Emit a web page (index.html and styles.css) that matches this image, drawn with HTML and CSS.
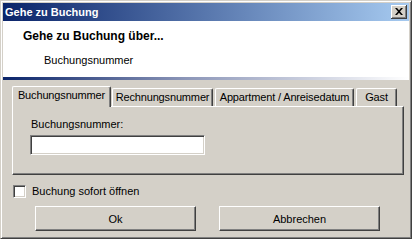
FILE: index.html
```html
<!DOCTYPE html>
<html lang="de">

<head>
    <meta charset="UTF-8">
    <title>Gehe zu Buchung</title>
    <link rel="stylesheet" href="styles.css">
</head>

<body>
    <div class="window">
        <div class="titlebar">
            <span class="title">Gehe zu Buchung</span>
            <button class="close" title="Schließen">
                <svg width="8" height="7" viewBox="0 0 8 7">
                    <path d="M0 0h2l2 2.2L6 0h2L5 3.5 8 7H6L4 4.8 2 7H0l3-3.5z" fill="#000" />
                </svg>
            </button>
        </div>

        <div class="header">
            <div class="header-title">Gehe zu Buchung über...</div>
            <div class="header-sub">Buchungsnummer</div>
        </div>
        <div class="header-line"></div>

        <div class="content">
            <div class="tabs">
                <div class="tab active tab-1">Buchungsnummer</div>
                <div class="tab tab-2">Rechnungsnummer</div>
                <div class="tab tab-3">Appartment / Anreisedatum</div>
                <div class="tab tab-4">Gast</div>
            </div>
            <div class="panel">
                <label for="nummer" class="field-label">Buchungsnummer:</label>
                <input type="text" id="nummer" class="field">
            </div>

            <label class="check">
                <span class="box"></span>
                Buchung sofort öffnen
            </label>

            <div class="buttons">
                <button class="btn">Ok</button>
                <button class="btn">Abbrechen</button>
            </div>
        </div>
    </div>
</body>

</html>
```

FILE: styles.css
```css
body {
    margin: 0;
    background-color: #d4d0c8;
    font-family: "Liberation Sans", Arial, sans-serif;
    font-size: 11px;
    color: #000;
}

.window {
    width: 412px;
    height: 239px;
    box-sizing: border-box;
    display: flex;
    flex-direction: column;
    padding: 2px;
    border-top: 1px solid #d4d0c8;
    border-left: 1px solid #d4d0c8;
    border-right: 1px solid #404040;
    border-bottom: 1px solid #404040;
    box-shadow: inset 1px 1px #fff, inset -1px -1px #808080;
    background-color: #d4d0c8;
}

/* title bar */
.titlebar {
    height: 18px;
    display: flex;
    align-items: center;
    justify-content: space-between;
    padding: 0 2px;
    background: linear-gradient(to right, #0a246a, #a6caf0);
}

.title {
    color: #fff;
    font-weight: bold;
    font-size: 11px;
    line-height: 18px;
}

.close {
    width: 16px;
    height: 14px;
    padding: 0;
    display: flex;
    align-items: center;
    justify-content: center;
    background-color: #d4d0c8;
    border: none;
    border-right: 1px solid #404040;
    border-bottom: 1px solid #404040;
    box-shadow: inset 1px 1px #fff, inset -1px -1px #808080;
}

/* white header */
.header {
    height: 56px;
    box-sizing: border-box;
    background-color: #fff;
    padding: 8px 0 0 20px;
}

.header-title {
    font-weight: bold;
    font-size: 12px;
    line-height: 14px;
}

.header-sub {
    margin: 11px 0 0 21px;
    line-height: 13px;
}

.header-line {
    height: 3px;
    background: linear-gradient(to right, #0a246a, #8c96b8 45%, #fff);
}

/* tabs */
.content {
    flex: 1;
    padding: 6px 0 0 9px;
}

.tabs {
    display: flex;
    align-items: flex-end;
    height: 20px;
    position: relative;
    z-index: 1;
}

.tab {
    height: 18px;
    box-sizing: border-box;
    text-align: center;
    line-height: 16px;
    letter-spacing: -0.15px;
    border-top: 1px solid #fff;
    border-left: 1px solid #fff;
    border-right: 1px solid #404040;
    border-radius: 2px 2px 0 0;
    box-shadow: inset -1px 0 #808080;
    background-color: #d4d0c8;
    white-space: nowrap;
}

.tab.active {
    height: 21px;
    margin-bottom: -1px;
    line-height: 17px;
}

.tab-1 { width: 99px; }
.tab-2 { width: 101px; margin-left: 1px; }
.tab-3 { width: 139px; margin-left: 2px; }
.tab-4 { width: 41px; margin-left: 2px; }

.panel {
    width: 392px;
    height: 69px;
    box-sizing: border-box;
    padding: 11px 0 0 17px;
    border-top: 1px solid #fff;
    border-left: 1px solid #fff;
    border-right: 1px solid #404040;
    border-bottom: 1px solid #404040;
    box-shadow: inset -1px -1px #808080;
}

.field-label {
    display: block;
    line-height: 13px;
    padding-left: 1px;
}

.field {
    display: block;
    width: 175px;
    height: 20px;
    margin-top: 4px;
    box-sizing: border-box;
    padding: 0 3px;
    font: inherit;
    background-color: #fff;
    border-top: 1px solid #808080;
    border-left: 1px solid #808080;
    border-right: 1px solid #fff;
    border-bottom: 1px solid #fff;
    box-shadow: inset 1px 1px #404040, inset -1px -1px #d4d0c8;
    outline: none;
}

/* checkbox */
.check {
    display: flex;
    align-items: center;
    gap: 6px;
    margin: 10px 0 0 1px;
    height: 13px;
    line-height: 13px;
}

.box {
    width: 13px;
    height: 13px;
    box-sizing: border-box;
    background-color: #fff;
    border-top: 1px solid #808080;
    border-left: 1px solid #808080;
    border-right: 1px solid #fff;
    border-bottom: 1px solid #fff;
    box-shadow: inset 1px 1px #404040, inset -1px -1px #d4d0c8;
}

/* buttons */
.buttons {
    display: flex;
    gap: 23px;
    margin: 8px 0 0 23px;
}

.btn {
    width: 161px;
    height: 25px;
    padding: 0;
    font: inherit;
    color: #000;
    background-color: #d4d0c8;
    border-top: 1px solid #fff;
    border-left: 1px solid #fff;
    border-right: 1px solid #404040;
    border-bottom: 1px solid #404040;
    box-shadow: inset -1px -1px #808080;
}
```
